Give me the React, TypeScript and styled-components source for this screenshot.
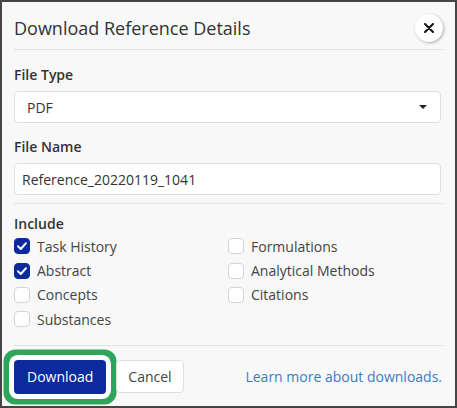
import React, { useState } from 'react';
import styled, { createGlobalStyle } from 'styled-components';

const GlobalStyle = createGlobalStyle`
  * {
    box-sizing: border-box;
  }
  body {
    margin: 0;
    font-family: "Open Sans", "Noto Sans", sans-serif;
    color: #333;
  }
`;

const Dialog = styled.div`
  width: 457px;
  height: 408px;
  border: 2px solid #454545;
  background-color: #f8f8f8;
  padding: 0 12px;
  display: flex;
  flex-direction: column;
`;

const Header = styled.header`
  display: flex;
  justify-content: space-between;
  align-items: center;
  padding: 12px 0 7px;
  border-bottom: 1px solid #e3e3e3;
`;

const Title = styled.h1`
  margin: 0;
  font-size: 18px;
  line-height: 24px;
  font-weight: 400;
  color: #333;
`;

const CloseButton = styled.button`
  width: 28px;
  height: 28px;
  border-radius: 50%;
  border: none;
  background-color: #fff;
  box-shadow: 1px 1px 3px rgba(0, 0, 0, 0.3);
  display: flex;
  align-items: center;
  justify-content: center;
  padding: 0;
  cursor: pointer;
`;

const Section = styled.section<{ $top: number; $bottom: number }>`
  padding: ${({ $top }) => $top}px 0 ${({ $bottom }) => $bottom}px;
  border-bottom: 1px solid #e3e3e3;
`;

const Label = styled.label<{ $space?: number }>`
  display: block;
  font-size: 14px;
  line-height: 20px;
  font-weight: 600;
  color: #333;
  margin-bottom: ${({ $space }) => ($space === undefined ? 6 : $space)}px;
`;

const Field = styled.div<{ $gap?: number }>`
  margin-top: ${({ $gap }) => $gap || 0}px;
`;

const SelectBox = styled.div`
  height: 32px;
  width: 427px;
  background-color: #fff;
  border: 1px solid #e0e0e0;
  border-radius: 4px;
  display: flex;
  align-items: center;
  justify-content: space-between;
  padding: 0 13px 0 12px;
  font-size: 14px;
  color: #333;
`;

const Caret = styled.span`
  width: 0;
  height: 0;
  border-left: 4px solid transparent;
  border-right: 4px solid transparent;
  border-top: 4px solid #222;
`;

const TextInput = styled.input`
  display: block;
  height: 32px;
  width: 427px;
  background-color: #fff;
  border: 1px solid #e0e0e0;
  border-radius: 4px;
  padding: 0 7px;
  font-family: inherit;
  font-size: 14px;
  color: #333;
  outline: none;
`;

const OptionGrid = styled.div`
  display: grid;
  grid-template-columns: 214px 1fr;
  grid-auto-rows: 24.4px;
`;

const Option = styled.label`
  display: flex;
  align-items: center;
  gap: 7px;
  font-size: 14px;
  color: #444;
  cursor: pointer;
`;

const Box = styled.span<{ $checked: boolean }>`
  width: 16px;
  height: 16px;
  border-radius: 4px;
  flex-shrink: 0;
  display: flex;
  align-items: center;
  justify-content: center;
  background-color: ${({ $checked }) => ($checked ? '#0b2b9c' : '#fff')};
  border: 1px solid ${({ $checked }) => ($checked ? '#0b2b9c' : '#d4d4d4')};
`;

const Footer = styled.footer`
  display: flex;
  align-items: center;
  padding-top: 14px;
`;

const PrimaryButton = styled.button`
  height: 34px;
  padding: 0 13px;
  border: none;
  border-radius: 4px;
  background-color: #0a2a9e;
  color: #fff;
  font-family: inherit;
  font-size: 14px;
  cursor: pointer;
  box-shadow: 0 0 0 5px #fff, 0 0 0 10.5px #2ea55b;
`;

const SecondaryButton = styled.button`
  height: 33px;
  margin-left: 10px;
  padding: 0 11px;
  border: 1px solid #dedede;
  border-radius: 4px;
  background-color: #fff;
  color: #444;
  font-family: inherit;
  font-size: 14px;
  cursor: pointer;
`;

const LearnMore = styled.a`
  margin-left: auto;
  margin-right: 1px;
  font-size: 14px;
  color: #3a7cc6;
  text-decoration: none;
`;

const options = [
  { name: 'Task History', checked: true },
  { name: 'Formulations', checked: false },
  { name: 'Abstract', checked: true },
  { name: 'Analytical Methods', checked: false },
  { name: 'Concepts', checked: false },
  { name: 'Citations', checked: false },
  { name: 'Substances', checked: false },
];

const App: React.FC = () => {
  const [checked, setChecked] = useState(options.map((o) => o.checked));

  const toggle = (i: number) => {
    setChecked((prev) => prev.map((v, j) => (j === i ? !v : v)));
  };

  return (
    <>
      <GlobalStyle />
      <Dialog>
        <Header>
          <Title>Download Reference Details</Title>
          <CloseButton aria-label="Close">
            <svg width="10" height="10" viewBox="0 0 10 10">
              <path d="M1 1 L9 9 M9 1 L1 9" stroke="#111" strokeWidth="2" strokeLinecap="round" />
            </svg>
          </CloseButton>
        </Header>

        <Section $top={15} $bottom={8}>
          <Field>
            <Label>File Type</Label>
            <SelectBox>
              PDF
              <Caret />
            </SelectBox>
          </Field>
          <Field $gap={14}>
            <Label>File Name</Label>
            <TextInput defaultValue="Reference_20220119_1041" />
          </Field>
        </Section>

        <Section $top={10} $bottom={13}>
          <Label $space={0}>Include</Label>
          <OptionGrid>
            {options.map((o, i) => (
              <Option key={o.name} onClick={() => toggle(i)}>
                <Box $checked={checked[i]}>
                  {checked[i] && (
                    <svg width="12" height="12" viewBox="0 0 12 12">
                      <path d="M2 6.3 L4.8 9 L10 3.2" fill="none" stroke="#fff" strokeWidth="2" strokeLinecap="round" strokeLinejoin="round" />
                    </svg>
                  )}
                </Box>
                {o.name}
              </Option>
            ))}
          </OptionGrid>
        </Section>

        <Footer>
          <PrimaryButton>Download</PrimaryButton>
          <SecondaryButton>Cancel</SecondaryButton>
          <LearnMore href="#">Learn more about downloads.</LearnMore>
        </Footer>
      </Dialog>
    </>
  );
};

export default App;
